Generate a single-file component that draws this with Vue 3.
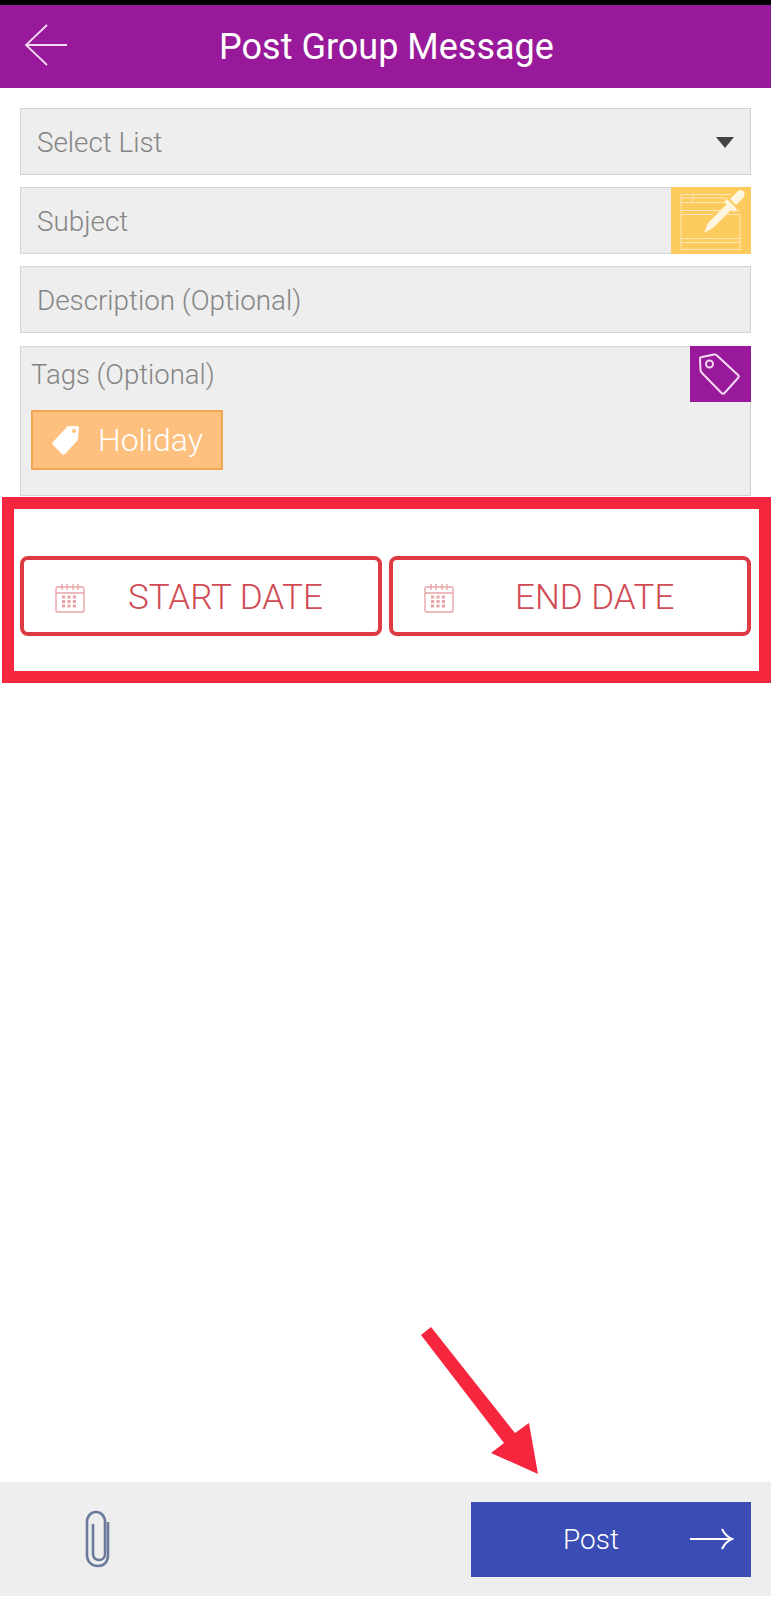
<script setup>
const fields = ['Description (Optional)']
</script>

<template>
  <div class="page">
    <div class="status"></div>
    <header class="header">
      <svg class="back" width="44" height="44" viewBox="0 0 44 44" fill="none" stroke="#f6d9f4" stroke-width="1.8">
        <path d="M23 2 2 22 23 42" />
        <path d="M2 22h41" />
      </svg>
      <h1 class="title">Post Group Message</h1>
    </header>

    <div class="form">
      <div class="field">
        <span>Select List</span>
        <span class="caret"></span>
      </div>
      <div class="field subject">
        <span>Subject</span>
        <div class="note">
          <svg width="80" height="67" viewBox="0 0 80 67" fill="none" stroke="#fde9b8" stroke-width="1">
            <path d="M10 7.500h50M10 11h46M10 15.500h44M10 23.500h40M60 23.500h9M10 27.500h32M54 27.500h15M10 51.500h59M10 55.500h59M10 62.500h59" />
            <path d="M10 7v56M69 27v36M22 7v8" />
            <g fill="#fff6e0" stroke="none">
              <path d="M33 46 37 36 56 17 61 22 42 41Z" />
              <path d="M53 15 56 12 66 22 63 25Z" />
              <path d="M59 12 67 4C69 2 72 3 73 5 74 7 74 9 72 11L65 18Z" />
            </g>
          </svg>
        </div>
      </div>
      <div v-for="label in fields" :key="label" class="field">{{ label }}</div>
      <div class="tags">
        <div class="tags-label">Tags (Optional)</div>
        <div class="tag-btn">
          <svg width="61" height="56" viewBox="0 0 61 56" fill="none" stroke="#f6d9f4" stroke-width="2" stroke-linejoin="round">
            <path d="M12 11 24 8.500C25 8.300 26 8.500 27 9.500L48 29C49 30 49 31 48 32L35 46.500C34 48 32.500 48 31.500 47L12 27C11 26 10.500 25 10.500 24L10 13C10 12 11 11 12 11Z" />
            <circle cx="19.500" cy="18" r="3.500" />
          </svg>
        </div>
        <div class="chip">
          <svg width="30" height="30" viewBox="0 0 30 30">
            <path d="M17 1h9c1 0 2 1 2 2l-1 10c0 1 0 2-1 3L14 29c-1 1-2 1-3 0L2 20c-1-1-1-2 0-3L15 3c1-1 1-2 2-2z" fill="#fff" />
            <circle cx="23" cy="6" r="2" fill="#fdc07e" />
          </svg>
          <span>Holiday</span>
        </div>
      </div>

      <div class="dates">
        <button class="date-btn">
          <svg class="cal" width="30" height="30" viewBox="0 0 30 30" fill="none" stroke="#e8a5a8" stroke-width="1.4">
            <rect x="1" y="4" width="28" height="25" rx="1.500" />
            <path d="M1 10h28M7 1v6M12 1v6M18 1v6M23 1v6" />
            <path d="M7 14h16M7 18.500h16M7 23h16" stroke-width="3" stroke-dasharray="3.200 2.200" />
          </svg>
          <span class="start">START DATE</span>
        </button>
        <button class="date-btn">
          <svg class="cal" width="30" height="30" viewBox="0 0 30 30" fill="none" stroke="#e8a5a8" stroke-width="1.4">
            <rect x="1" y="4" width="28" height="25" rx="1.500" />
            <path d="M1 10h28M7 1v6M12 1v6M18 1v6M23 1v6" />
            <path d="M7 14h16M7 18.500h16M7 23h16" stroke-width="3" stroke-dasharray="3.200 2.200" />
          </svg>
          <span class="end">END DATE</span>
        </button>
      </div>
    </div>

    <footer class="bottom">
      <svg class="clip" width="26" height="58" viewBox="0 0 26 58" fill="none" stroke="#6b7a9c" stroke-width="2.600">
        <path d="M23 12v33c0 7-4 11-10 11S2 52 2 45V12C2 6 6 2 11 2s9 4 9 10v32c0 4-3 6-6 6s-6-2-6-6V14" />
      </svg>
      <button class="post">
        <span>Post</span>
        <svg class="post-arrow" width="44" height="22" viewBox="0 0 44 22" fill="none" stroke="#fff" stroke-width="2">
          <path d="M0 11h42M32 1c2 4 5 8 10 10-5 2-8 6-10 10" />
        </svg>
      </button>
    </footer>

    <!-- annotation drawn on top of the screenshot -->
    <div class="frame"></div>
    <svg class="pointer" width="130" height="160" viewBox="0 0 130 160">
      <path d="M3 13 13 5 97 111 111 101 120 152 73 131 86 121Z" fill="#f7263f" />
    </svg>
  </div>
</template>

<style scoped>
.page {
  position: relative;
  display: flex;
  flex-direction: column;
  width: 771px;
  height: 1600px;
  background: #fff;
  font-family: Roboto, "Liberation Sans", sans-serif;
  overflow: hidden;
}

.status {
  height: 5px;
  background: #000;
}

.header {
  position: relative;
  display: flex;
  align-items: center;
  justify-content: center;
  height: 83px;
  background: #981a9a;
}

.back {
  position: absolute;
  left: 24px;
  top: 18px;
}

.title {
  margin: 0 0 0 2px;
  color: #fff;
  font-size: 36px;
  font-weight: 400;
}

.form {
  display: flex;
  flex-direction: column;
  gap: 12px;
  padding: 20px 20px 0 20px;
}

.field {
  display: flex;
  align-items: center;
  justify-content: space-between;
  height: 67px;
  box-sizing: border-box;
  padding: 1px 16px 0;
  background: #eeeeee;
  border: 1px solid #d4d4d4;
  color: #858585;
  font-size: 27.800px;
  font-weight: 300;
}

.caret {
  width: 0;
  height: 0;
  border-left: 9px solid transparent;
  border-right: 9px solid transparent;
  border-top: 11px solid #444;
}

.subject {
  padding: 0 0 0 16px;
}

.subject > span {
  padding-top: 1px;
}

.note {
  display: flex;
  align-items: center;
  width: 80px;
  height: 67px;
  margin-right: -1px;
  background: #fdca5e;
}

.tags {
  position: relative;
  height: 150px;
  box-sizing: border-box;
  margin-top: 1px;
  padding: 12px 10px;
  background: #eeeeee;
  border: 1px solid #d4d4d4;
  color: #858585;
  font-size: 27.500px;
  font-weight: 300;
}

.tags-label {
  line-height: 32px;
}

.tag-btn {
  position: absolute;
  top: -1px;
  right: -1px;
  width: 61px;
  height: 56px;
  background: #981a9a;
}

.chip {
  display: inline-flex;
  align-items: center;
  gap: 17px;
  width: 192px;
  height: 60px;
  box-sizing: border-box;
  margin-top: 19px;
  padding-left: 18px;
  background: #fdc07e;
  border: 2px solid #f2a550;
  color: #fff;
  font-size: 32px;
}

.dates {
  display: flex;
  gap: 7px;
  margin-top: 48px;
}

.date-btn {
  position: relative;
  flex: 1;
  height: 80px;
  box-sizing: border-box;
  padding: 3px 0 0;
  background: #fff;
  border: 4px solid #dd3a42;
  border-radius: 8px;
  color: #cf4a52;
  font-family: inherit;
  font-weight: 300;
  font-size: 35px;
  display: flex;
  align-items: center;
}

.cal {
  margin-left: 31px;
}

.start {
  margin-left: 43px;
}

.end {
  margin-left: 61px;
}

.bottom {
  display: flex;
  align-items: center;
  justify-content: space-between;
  box-sizing: border-box;
  height: 114px;
  margin-top: auto;
  margin-bottom: 4px;
  padding: 0 20px 0 85px;
  background: #eeeeef;
}

.post {
  position: relative;
  width: 280px;
  height: 75px;
  padding: 0 0 0 92px;
  border: none;
  background: #3b4db5;
  color: #fff;
  font-family: inherit;
  font-weight: 300;
  font-size: 28px;
  display: flex;
  align-items: center;
}

.post-arrow {
  margin-left: 71px;
}

.frame {
  position: absolute;
  left: 2px;
  top: 497px;
  width: 769px;
  height: 186px;
  box-sizing: border-box;
  border: 12px solid #f7263f;
}

.pointer {
  position: absolute;
  left: 418px;
  top: 1322px;
}
</style>
